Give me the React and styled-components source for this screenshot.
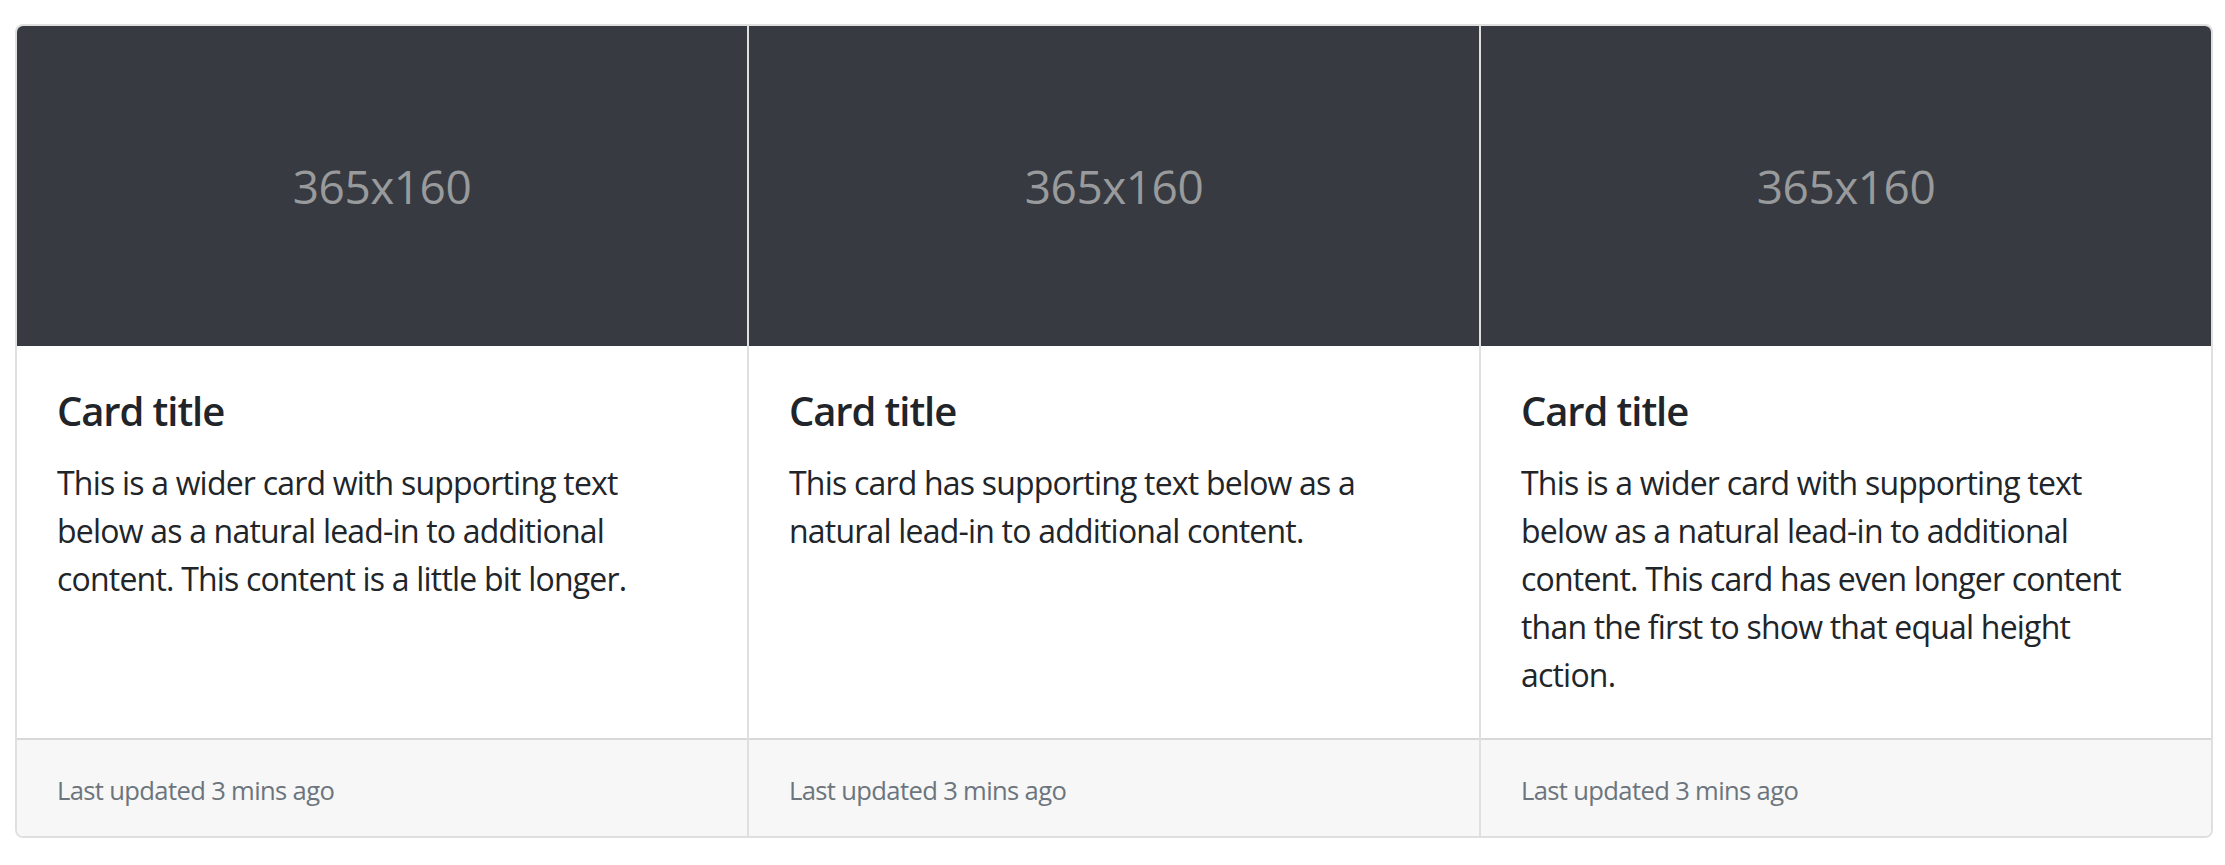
import React from "react";
import styled, { createGlobalStyle } from "styled-components";

const Global = createGlobalStyle`
  html, body { margin: 0; padding: 0; background: #fff; }
  body {
    font-family: "Open Sans", "Noto Sans", sans-serif;
    color: #212529;
    -webkit-font-smoothing: antialiased;
  }
`;

const Page = styled.div`
  padding: 24px 12px 0 15px;
`;

const CardGroup = styled.div`
  display: flex;
  border: 2px solid rgba(0, 0, 0, 0.125);
  border-radius: 8px;
  overflow: hidden;
`;

const Card = styled.div`
  flex: 1 1 0;
  min-width: 0;
  display: flex;
  flex-direction: column;
  background: #fff;
  & + & {
    border-left: 2px solid rgba(0, 0, 0, 0.125);
  }
`;

const Placeholder = styled.div`
  height: 320px;
  background: #373a41;
  display: flex;
  align-items: center;
  justify-content: center;
  color: #999a9c;
  font-size: 46px;
  letter-spacing: -0.5px;
`;

const Body = styled.div`
  flex: 1 1 auto;
  padding: 41px 40px 39px;
`;

const Title = styled.h5`
  margin: 0 0 24px;
  font-size: 40px;
  font-weight: 600;
  line-height: 48px;
  letter-spacing: -1.1px;
`;

const Text = styled.p`
  margin: 0;
  font-size: 32px;
  line-height: 48px;
  letter-spacing: -0.8px;
`;

const Footer = styled.div`
  padding: 24px 40px;
  background: rgba(0, 0, 0, 0.03);
  border-top: 2px solid rgba(0, 0, 0, 0.125);
`;

const FooterLine = styled.p`
  box-sizing: border-box;
  margin: 0;
  height: 48px;
  padding-top: 5px;
  display: flex;
  align-items: center;
`;

const Muted = styled.small`
  font-size: 25.6px;
  line-height: 1;
  color: #6c757d;
  letter-spacing: -0.65px;
`;

const cards = [
  "This is a wider card with supporting text below as a natural lead-in to additional content. This content is a little bit longer.",
  "This card has supporting text below as a natural lead-in to additional content.",
  "This is a wider card with supporting text below as a natural lead-in to additional content. This card has even longer content than the first to show that equal height action.",
];

export default function App() {
  return (
    <Page>
      <Global />
      <CardGroup>
        {cards.map((t, i) => (
          <Card key={i}>
            <Placeholder>365x160</Placeholder>
            <Body>
              <Title>Card title</Title>
              <Text>{t}</Text>
            </Body>
            <Footer>
              <FooterLine>
                <Muted>Last updated 3 mins ago</Muted>
              </FooterLine>
            </Footer>
          </Card>
        ))}
      </CardGroup>
    </Page>
  );
}
